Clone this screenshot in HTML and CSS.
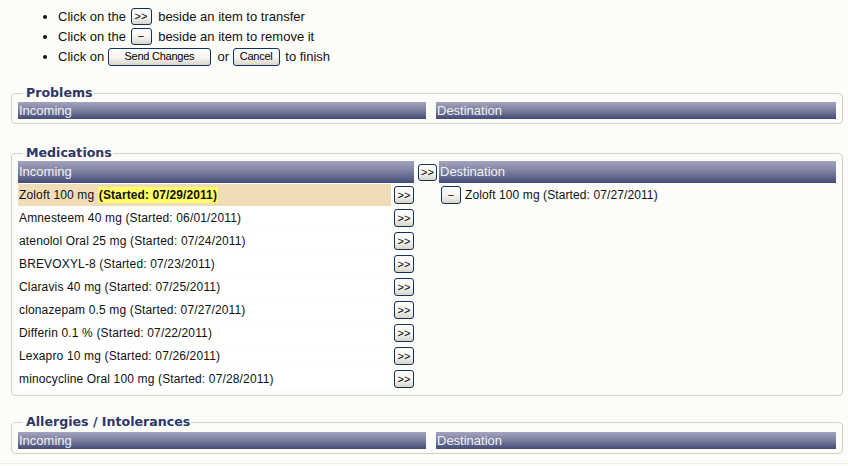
FILE: index.html
```html
<!DOCTYPE html>
<html>
<head>
<meta charset="utf-8">
<link rel="stylesheet" href="styles.css">
</head>
<body>
<div class="page">
  <ul class="help">
    <li>Click on the <span class="btn btn-sm">&gt;&gt;</span> beside an item to transfer</li>
    <li>Click on the <span class="btn btn-sm">&minus;</span> beside an item to remove it</li>
    <li>Click on <span class="btn btn-send">Send Changes</span> or <span class="btn btn-cancel">Cancel</span> to finish</li>
  </ul>

  <fieldset class="group group-problems">
    <legend>Problems</legend>
    <div class="cols2">
      <div class="hdr">Incoming</div>
      <div class="hdr">Destination</div>
    </div>
  </fieldset>

  <fieldset class="group group-meds">
    <legend>Medications</legend>
    <div class="cols3">
      <div class="left">
        <div class="hdr hdr-tall">Incoming</div>
        <div class="item"><div class="txt hl">Zoloft 100 mg <b class="mark">(Started: 07/29/2011)</b></div><span class="btn btn-row">&gt;&gt;</span></div>
        <div class="item"><div class="txt">Amnesteem 40 mg (Started: 06/01/2011)</div><span class="btn btn-row">&gt;&gt;</span></div>
        <div class="item"><div class="txt">atenolol Oral 25 mg (Started: 07/24/2011)</div><span class="btn btn-row">&gt;&gt;</span></div>
        <div class="item"><div class="txt">BREVOXYL-8 (Started: 07/23/2011)</div><span class="btn btn-row">&gt;&gt;</span></div>
        <div class="item"><div class="txt">Claravis 40 mg (Started: 07/25/2011)</div><span class="btn btn-row">&gt;&gt;</span></div>
        <div class="item"><div class="txt">clonazepam 0.5 mg (Started: 07/27/2011)</div><span class="btn btn-row">&gt;&gt;</span></div>
        <div class="item"><div class="txt">Differin 0.1 % (Started: 07/22/2011)</div><span class="btn btn-row">&gt;&gt;</span></div>
        <div class="item"><div class="txt">Lexapro 10 mg (Started: 07/26/2011)</div><span class="btn btn-row">&gt;&gt;</span></div>
        <div class="item"><div class="txt">minocycline Oral 100 mg (Started: 07/28/2011)</div><span class="btn btn-row">&gt;&gt;</span></div>
      </div>
      <div class="mid"><span class="btn btn-row btn-all">&gt;&gt;</span></div>
      <div class="right">
        <div class="hdr hdr-tall">Destination</div>
        <div class="dest"><span class="btn btn-row">&minus;</span><span class="dtxt">Zoloft 100 mg (Started: 07/27/2011)</span></div>
      </div>
    </div>
  </fieldset>

  <fieldset class="group group-allergies">
    <legend>Allergies / Intolerances</legend>
    <div class="cols2">
      <div class="hdr">Incoming</div>
      <div class="hdr">Destination</div>
    </div>
  </fieldset>

  <div class="footer"></div>
</div>
</body>
</html>
```

FILE: styles.css
```css
html, body {
  margin: 0;
  padding: 0;
  background: #fcfcf9;
}

body {
  font-family: "Liberation Sans", Arial, sans-serif;
  font-size: 13px;
  color: #111;
}

.page {
  padding: 7px 5px 0 11px;
}

.help {
  margin: 0 0 18px 0;
  padding: 0 0 0 47px;
  list-style: disc;
}

.help li {
  line-height: 20px;
  height: 20px;
}

.btn {
  display: inline-flex;
  align-items: center;
  justify-content: center;
  box-sizing: border-box;
  border: 1px solid #0f3260;
  border-radius: 3px;
  background: linear-gradient(#ffffff 0%, #f4f3ef 55%, #d9d5cb 100%);
  color: #000;
  font-family: "Liberation Sans", Arial, sans-serif;
  vertical-align: middle;
  line-height: 1;
}

.btn-sm {
  width: 21px;
  height: 17px;
  font-size: 11px;
  margin: -2px 3px 0 1px;
}

.btn-send {
  width: 103px;
  height: 18px;
  font-size: 11px;
  letter-spacing: -0.25px;
  margin: -2px 3px 0 0;
}

.btn-cancel {
  width: 47px;
  height: 18px;
  font-size: 11px;
  letter-spacing: -0.25px;
  margin: -2px 2px 0 0;
}

.group {
  margin: 0;
  padding: 0 6px 4px 6px;
  border: 1px solid #d3d2c2;
  border-radius: 4px;
}

.group legend {
  margin-left: 5px;
  padding: 0 1px 0 3px;
  font-family: "DejaVu Sans", Verdana, sans-serif;
  font-weight: bold;
  font-size: 12.6px;
  line-height: 16px;
  color: #2e3668;
}

.group-problems {
  margin-bottom: 21px;
  padding-top: 1px;
}

.group-meds {
  margin-bottom: 18px;
}

.group-allergies {
  padding-top: 2px;
}

.hdr {
  height: 17px;
  line-height: 17px;
  padding-left: 1px;
  color: #f2f2f6;
  font-size: 13px;
  background: linear-gradient(#a3a4be 0%, #7a7e9e 50%, #424a76 100%);
}

.hdr-tall {
  height: 22px;
  line-height: 22px;
  margin-bottom: 1px;
}

.cols2 {
  display: grid;
  grid-template-columns: 408px 1fr;
  column-gap: 10px;
}

.cols3 {
  display: grid;
  grid-template-columns: 396px 25px 1fr;
}

.item {
  display: flex;
  align-items: center;
  height: 22px;
  margin-bottom: 1px;
}

.txt {
  width: 372px;
  height: 22px;
  line-height: 22px;
  padding-left: 1px;
  font-size: 12px;
  letter-spacing: 0.15px;
  background: #ffffff;
}

.txt.hl {
  background: #f0dcb8;
}

.mark {
  background: #ffff66;
  padding: 1px 1px;
  letter-spacing: 0.1px;
}

.btn-row {
  width: 20px;
  height: 18px;
  font-size: 11px;
  margin-left: 3px;
}

.mid {
  padding-top: 3px;
}

.btn-all {
  margin-left: 4px;
  width: 19px;
  height: 17px;
}

.dest {
  display: flex;
  align-items: center;
  height: 22px;
}

.dest .btn-row {
  margin-left: 2px;
}

.dtxt {
  margin-left: 4px;
  font-size: 12px;
  letter-spacing: 0.1px;
}

.footer {
  margin-top: 9px;
  margin-left: -11px;
  margin-right: -5px;
  border-top: 1px solid #eeeddf;
  height: 4px;
}
```
